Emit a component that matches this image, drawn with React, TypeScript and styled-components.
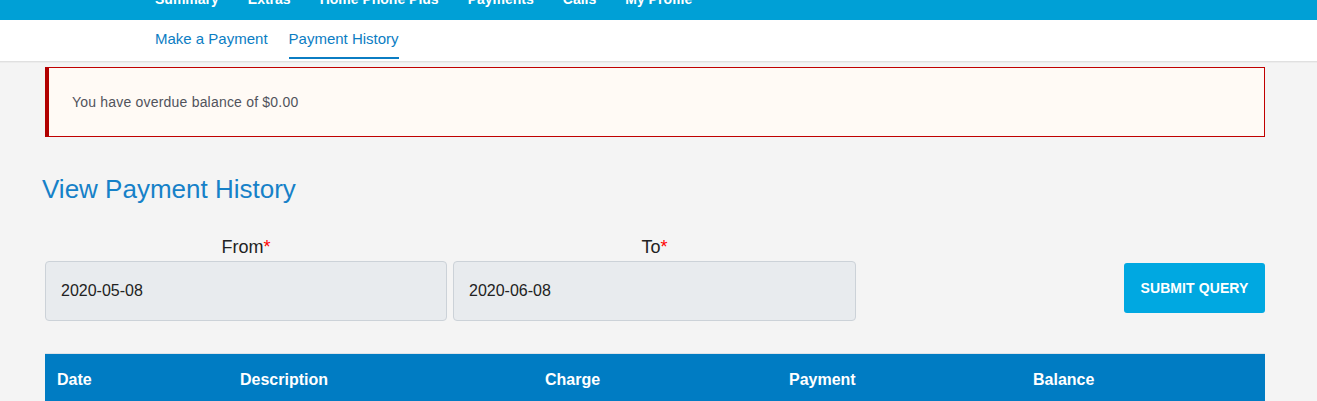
import React from "react";
import styled, { createGlobalStyle } from "styled-components";

const Global = createGlobalStyle`
  html, body { margin: 0; padding: 0; background: #f4f4f4; }
  body { font-family: "Liberation Sans", Arial, sans-serif; }
  * { box-sizing: border-box; }
`;

const TopBar = styled.div`
  height: 20px;
  background: #00a0d6;
  overflow: hidden;
  display: flex;
  gap: 29px;
  padding-left: 155px;
`;

const TopItem = styled.span`
  color: #fff;
  font-weight: bold;
  font-size: 14px;
  line-height: 20px;
  margin-top: -11px;
  white-space: nowrap;
`;

const SubNav = styled.nav`
  height: 42px;
  background: #fff;
  border-bottom: 1px solid #e0e0e0;
  display: flex;
  gap: 21px;
  padding-left: 155px;
  box-shadow: 0 1px 0 #ececec;
`;

const SubLink = styled.a<{ $active?: boolean }>`
  color: #0b7dc3;
  font-size: 15px;
  text-decoration: none;
  padding-top: 10px;
  height: 39px;
  border-bottom: 2px solid ${(p) => (p.$active ? "#0b7dc3" : "transparent")};
`;

const Main = styled.main`
  padding: 5px 52px 0 45px;
`;

const Alert = styled.div`
  height: 70px;
  background: #fffaf5;
  border: 1px solid #c00000;
  border-left: 4px solid #b00000;
  display: flex;
  align-items: center;
  padding-left: 23px;
  color: #51535c;
  font-size: 14px;
  letter-spacing: 0.2px;
`;

const Heading = styled.h2`
  margin: 37px 0 0 -3px;
  color: #1681c8;
  font-weight: normal;
  font-size: 26px;
  line-height: 30px;
`;

const FormRow = styled.div`
  margin-top: 32px;
  display: grid;
  grid-template-columns: 402px 403px 1fr;
  column-gap: 6px;
`;

const Field = styled.div`
  display: flex;
  flex-direction: column;
  align-items: center;
`;

const Label = styled.label`
  font-size: 18px;
  line-height: 22px;
  color: #222;
  margin-bottom: 3px;
`;

const Req = styled.span`
  color: #ff0000;
`;

const Input = styled.div`
  width: 100%;
  height: 60px;
  background: #e8ebee;
  border: 1px solid #ccd2d8;
  border-radius: 4px;
  display: flex;
  align-items: center;
  padding-left: 15px;
  font-size: 16px;
  color: #222;
`;

const ButtonCell = styled.div`
  display: flex;
  justify-content: flex-end;
  align-items: flex-start;
  padding-top: 27px;
`;

const Button = styled.button`
  width: 141px;
  height: 50px;
  background: #00a8e1;
  border: none;
  border-radius: 3px;
  color: #fff;
  font-family: "Liberation Sans", Arial, sans-serif;
  font-weight: bold;
  font-size: 14px;
  letter-spacing: 0.1px;
`;

const Table = styled.div`
  margin-top: 32px;
  border-top: 1px solid #dde3e8;
`;

const HeadRow = styled.div`
  display: grid;
  grid-template-columns: 15% 25% 20% 20% 20%;
  background: #007cc3;
  height: 50px;
  align-items: center;
`;

const HeadCell = styled.div`
  color: #fff;
  font-weight: bold;
  font-size: 16px;
  padding-left: 12px;
  padding-top: 1px;
`;

export default function App() {
  const top = ["Summary", "Extras", "Home Phone Plus", "Payments", "Calls", "My Profile"];
  const cols = ["Date", "Description", "Charge", "Payment", "Balance"];
  return (
    <>
      <Global />
      <TopBar>
        {top.map((t) => (
          <TopItem key={t}>{t}</TopItem>
        ))}
      </TopBar>
      <SubNav>
        <SubLink>Make a Payment</SubLink>
        <SubLink $active>Payment History</SubLink>
      </SubNav>
      <Main>
        <Alert>You have overdue balance of $0.00</Alert>
        <Heading>View Payment History</Heading>
        <FormRow>
          <Field>
            <Label>
              From<Req>*</Req>
            </Label>
            <Input>2020-05-08</Input>
          </Field>
          <Field>
            <Label>
              To<Req>*</Req>
            </Label>
            <Input>2020-06-08</Input>
          </Field>
          <ButtonCell>
            <Button>SUBMIT QUERY</Button>
          </ButtonCell>
        </FormRow>
        <Table>
          <HeadRow>
            {cols.map((c) => (
              <HeadCell key={c}>{c}</HeadCell>
            ))}
          </HeadRow>
        </Table>
      </Main>
    </>
  );
}
